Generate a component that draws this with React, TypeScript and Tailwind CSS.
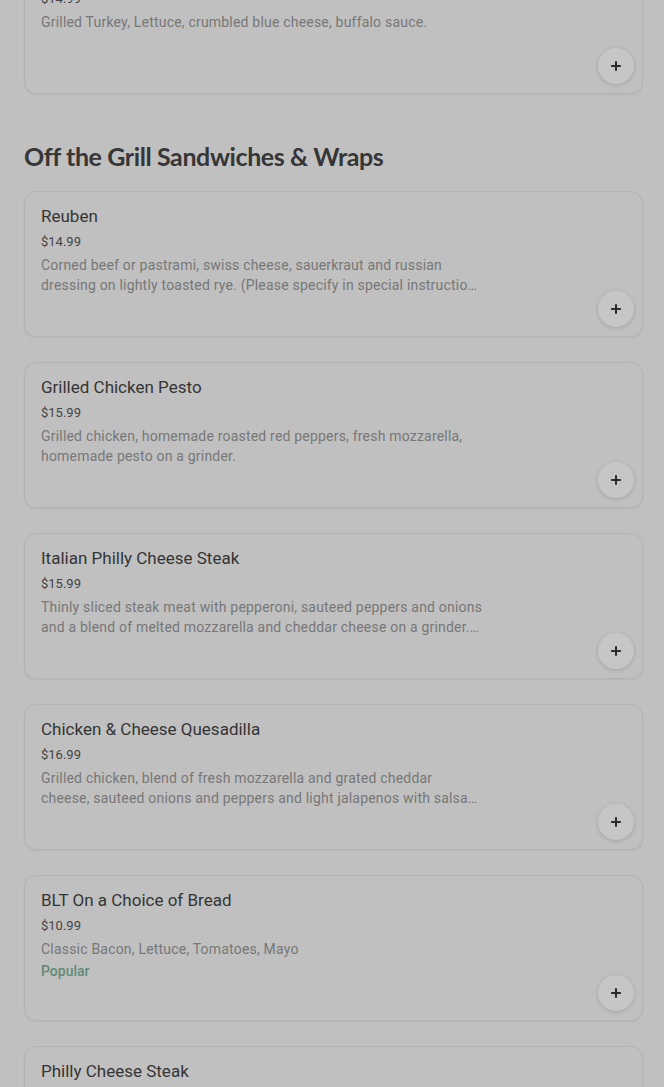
import { Plus } from "lucide-react"

interface MenuItem {
  name: string
  price: string
  description: string
  popular?: boolean
}

const sandwiches: MenuItem[] = [
  {
    name: "Reuben",
    price: "$14.99",
    description:
      "Corned beef or pastrami, swiss cheese, sauerkraut and russian dressing on lightly toasted rye. (Please specify in special instructions which meat you would like.)",
  },
  {
    name: "Grilled Chicken Pesto",
    price: "$15.99",
    description: "Grilled chicken, homemade roasted red peppers, fresh mozzarella, homemade pesto on a grinder.",
  },
  {
    name: "Italian Philly Cheese Steak",
    price: "$15.99",
    description:
      "Thinly sliced steak meat with pepperoni, sauteed peppers and onions and a blend of melted mozzarella and cheddar cheese on a grinder. Served with fries.",
  },
  {
    name: "Chicken & Cheese Quesadilla",
    price: "$16.99",
    description:
      "Grilled chicken, blend of fresh mozzarella and grated cheddar cheese, sauteed onions and peppers and light jalapenos with salsa and sour cream on the side.",
  },
  {
    name: "BLT On a Choice of Bread",
    price: "$10.99",
    description: "Classic Bacon, Lettuce, Tomatoes, Mayo",
    popular: true,
  },
  {
    name: "Philly Cheese Steak",
    price: "$14.99",
    description: "Thinly sliced steak meat with sauteed peppers and onions and melted cheese on a grinder.",
  },
]

function ItemCard({ item, className = "" }: { item: MenuItem; className?: string }) {
  return (
    <div
      className={`relative h-[146px] rounded-xl border border-[#b4b4b4] bg-[#c0c0c0] shadow-[0_1px_2px_rgba(0,0,0,0.06)] pl-4 pr-2 pt-3 ${className}`}
    >
      <div className="text-[17px] leading-6 text-[#353535]">{item.name}</div>
      <div className="mt-1 text-[13px] leading-5 text-[#444444]">{item.price}</div>
      <p className="mt-[3px] max-w-[442px] text-[14px] leading-5 tracking-[0.2px] text-[#777777] line-clamp-2">
        {item.description}
      </p>
      {item.popular && <div className="text-[14px] leading-6 font-medium text-[#5f8b76]">Popular</div>}
      {/* add button sits over the card's bottom-right corner */}
      <button className="absolute right-2 bottom-[9px] w-9 h-9 rounded-full bg-[#c6c6c6] shadow-[0_1px_4px_rgba(0,0,0,0.16)] flex items-center justify-center">
        <Plus className="w-[14px] h-[14px] text-[#2a2a2a]" strokeWidth={3.5} />
      </button>
    </div>
  )
}

export default function App() {
  return (
    <div className="w-[664px] h-[1087px] overflow-hidden bg-[#c0c0c0] pl-6 pr-[21px] font-['Roboto',sans-serif]">
      <ItemCard
        className="-mt-[52px]"
        item={{
          name: "Buffalo Turkey Wrap",
          price: "$14.99",
          description: "Grilled Turkey, Lettuce, crumbled blue cheese, buffalo sauce.",
        }}
      />

      <h2 className="mt-[44px] mb-[17px] text-[25px] leading-9 font-bold tracking-[-0.4px] text-[#363636] font-['Lato',sans-serif]">
        Off the Grill Sandwiches &amp; Wraps
      </h2>

      <div className="flex flex-col gap-[25px]">
        {sandwiches.map((item) => (
          <ItemCard key={item.name} item={item} />
        ))}
      </div>
    </div>
  )
}
